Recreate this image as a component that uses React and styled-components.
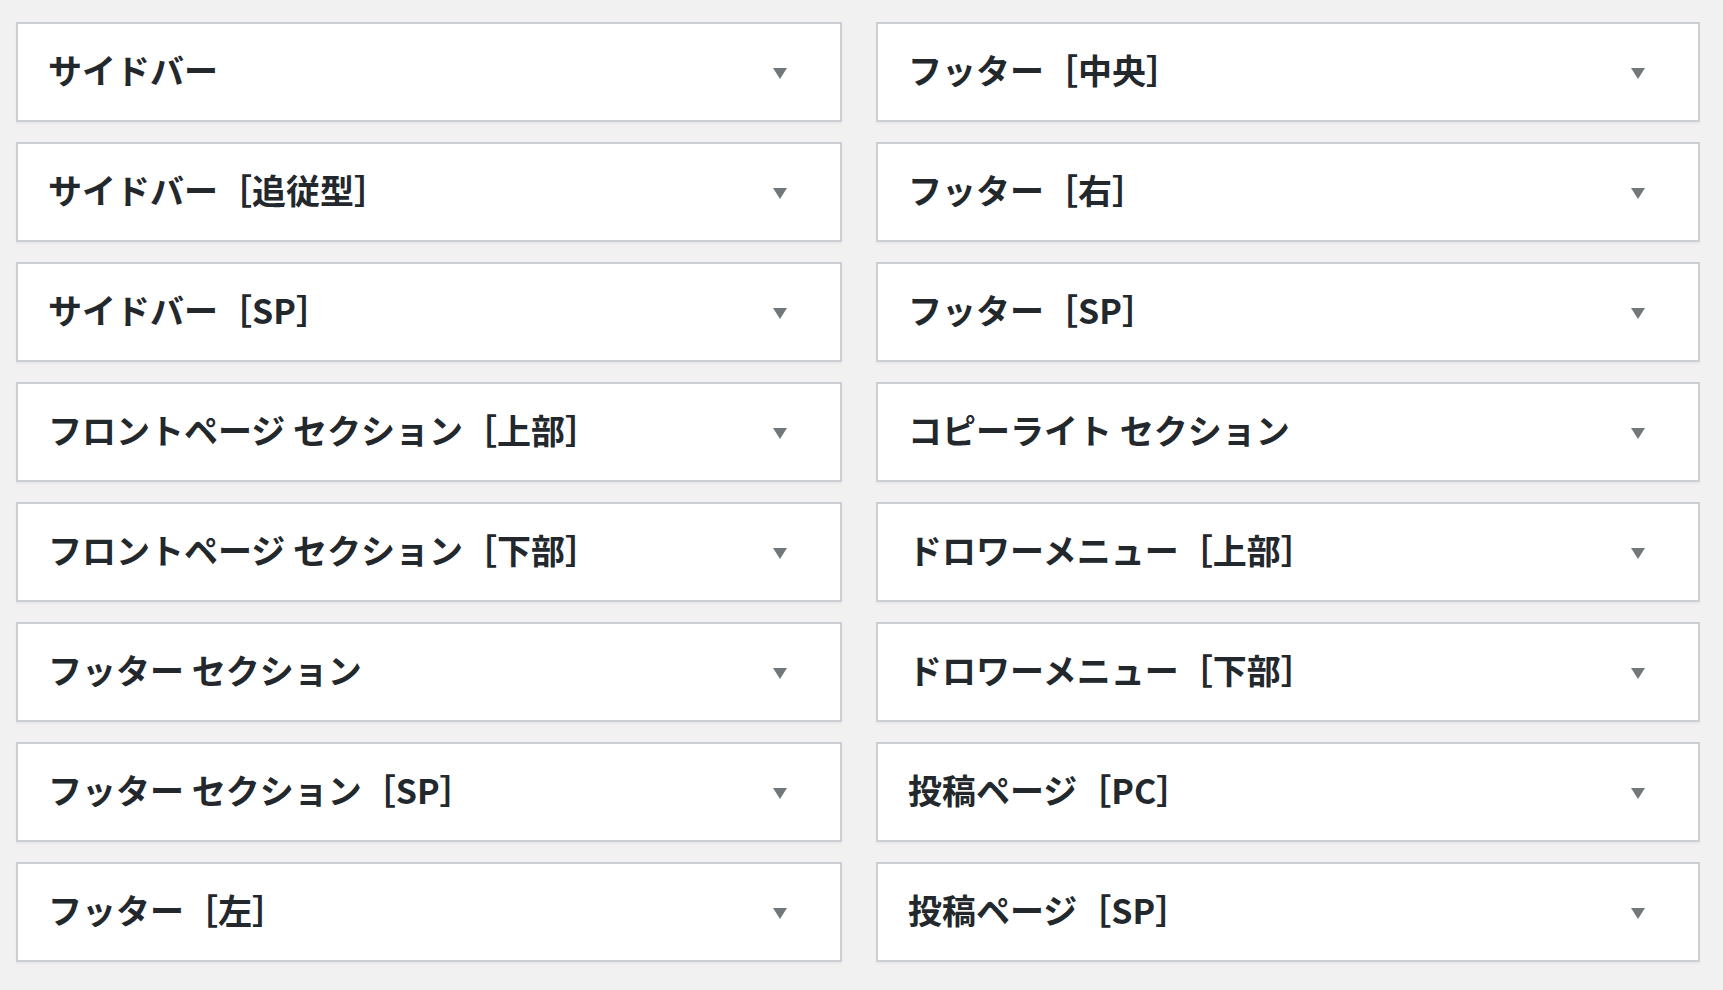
import React from "react";
import styled, { createGlobalStyle } from "styled-components";

const Global = createGlobalStyle`
  html, body { margin: 0; padding: 0; background: #f1f1f1; }
  body { font-family: "Noto Sans CJK JP", "Noto Sans", sans-serif; }
`;

const Page = styled.div`
  display: grid;
  grid-template-columns: 826px 824px;
  column-gap: 34px;
  padding: 22px 0 29px 16px;
`;

const Column = styled.div`
  display: flex;
  flex-direction: column;
  gap: 20px;
`;

const Section = styled.div`
  box-sizing: border-box;
  height: 100px;
  background: #fff;
  border: 2px solid #ccd0d4;
  box-shadow: 0 2px 2px rgba(0, 0, 0, 0.04);
  display: flex;
  align-items: center;
  justify-content: space-between;
  padding: 0 53px 0 30px;
`;

const Title = styled.h2`
  margin: 0 0 4px 0;
  font-family: "Noto Sans CJK JP", "Noto Sans", sans-serif;
  font-weight: 700;
  font-size: 34px;
  line-height: 1.2;
  color: #23282d;
  white-space: nowrap;
`;

const Arrow = styled.span`
  display: block;
  width: 0;
  height: 0;
  margin-top: 3px;
  border-left: 7.5px solid transparent;
  border-right: 7.5px solid transparent;
  border-top: 11px solid #72777c;
`;

const left = [
  "サイドバー",
  "サイドバー［追従型］",
  "サイドバー［SP］",
  "フロントページ セクション［上部］",
  "フロントページ セクション［下部］",
  "フッター セクション",
  "フッター セクション［SP］",
  "フッター［左］",
];

const right = [
  "フッター［中央］",
  "フッター［右］",
  "フッター［SP］",
  "コピーライト セクション",
  "ドロワーメニュー［上部］",
  "ドロワーメニュー［下部］",
  "投稿ページ［PC］",
  "投稿ページ［SP］",
];

function Area({ title }) {
  return (
    <Section>
      <Title>{title}</Title>
      <Arrow />
    </Section>
  );
}

export default function App() {
  return (
    <>
      <Global />
      <Page>
        <Column>
          {left.map((t) => (
            <Area key={t} title={t} />
          ))}
        </Column>
        <Column>
          {right.map((t) => (
            <Area key={t} title={t} />
          ))}
        </Column>
      </Page>
    </>
  );
}
